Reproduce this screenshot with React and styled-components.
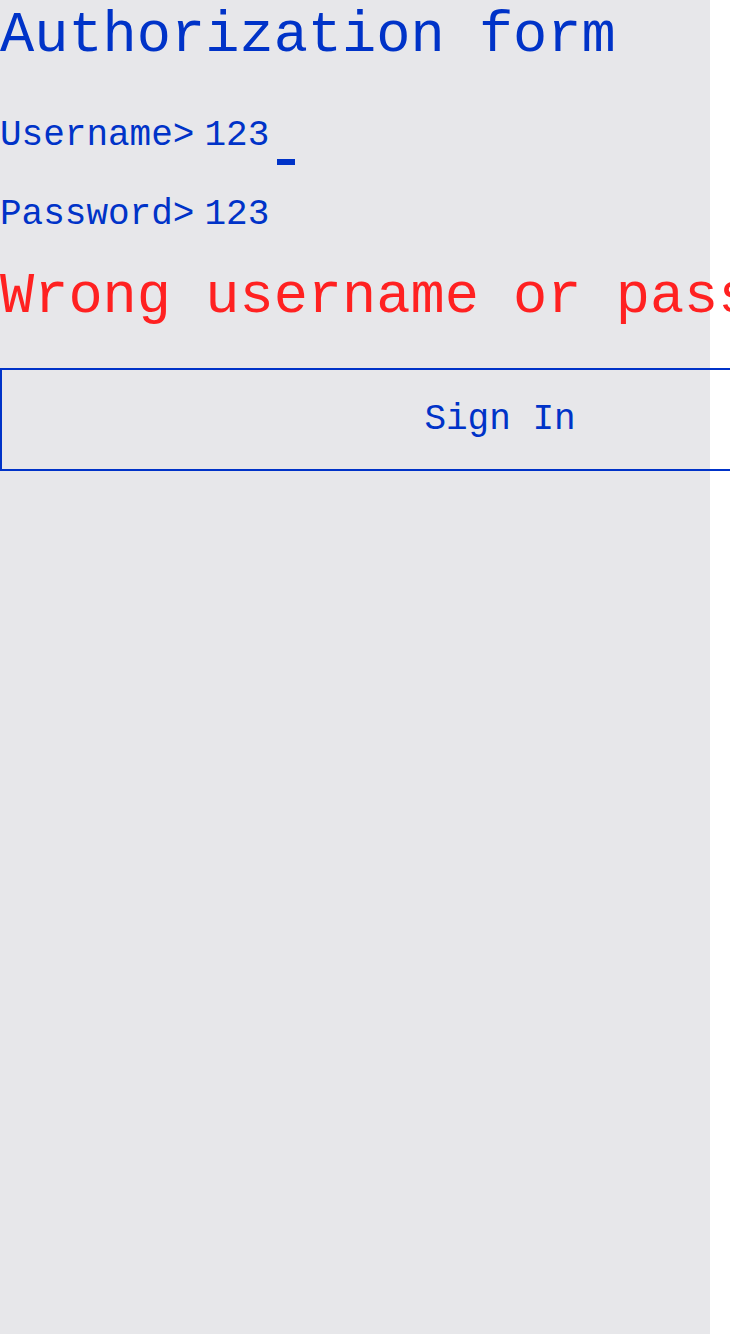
import React from "react";
import styled, { createGlobalStyle } from "styled-components";

const blue = "#0033c8";
const red = "#ff2121";
const mono = `"Liberation Mono", "DejaVu Sans Mono", monospace`;

const Global = createGlobalStyle`
  html, body { margin: 0; padding: 0; background: #ffffff; }
  body { font-family: ${mono}; }
`;

const Page = styled.div`
  width: 710px;
  min-height: 1334px;
  background: #e7e7ea;
  display: flex;
  flex-direction: column;
  align-items: flex-start;
  overflow: visible;
`;

const Title = styled.h1`
  margin: 0;
  padding-top: 4px;
  font-family: ${mono};
  font-weight: 400;
  font-size: 57px;
  line-height: normal;
  color: ${blue};
  white-space: nowrap;
`;

const Form = styled.form`
  display: flex;
  flex-direction: column;
  margin-top: 47px;
  gap: 38px;
`;

const Row = styled.div`
  display: flex;
  align-items: baseline;
  gap: 10px;
  font-family: ${mono};
  font-size: 36px;
  line-height: normal;
  color: ${blue};
  white-space: nowrap;
`;

const Label = styled.span``;

const Value = styled.span`
  display: inline-flex;
  align-items: baseline;
`;

const Cursor = styled.span`
  display: inline-block;
  width: 18px;
  height: 6px;
  margin-left: 8px;
  background: ${blue};
  align-self: flex-end;
  position: relative;
  top: 9px;
`;

const ErrorText = styled.div`
  margin-top: 30px;
  font-family: ${mono};
  font-size: 57px;
  line-height: normal;
  color: ${red};
  white-space: nowrap;
`;

const Button = styled.button`
  margin-top: 39px;
  width: 1000px;
  height: 103px;
  flex-shrink: 0;
  background: transparent;
  border: 2px solid ${blue};
  padding: 0;
  font-family: ${mono};
  font-size: 36px;
  color: ${blue};
  display: flex;
  align-items: center;
  justify-content: center;
`;

export default function App() {
  return (
    <>
      <Global />
      <Page>
        <Title>Authorization form</Title>
        <Form onSubmit={(e) => e.preventDefault()}>
          <Row>
            <Label>Username&gt;</Label>
            <Value>
              123
              <Cursor />
            </Value>
          </Row>
          <Row>
            <Label>Password&gt;</Label>
            <Value>123</Value>
          </Row>
        </Form>
        <ErrorText>Wrong username or password</ErrorText>
        <Button type="button">Sign In</Button>
      </Page>
    </>
  );
}
